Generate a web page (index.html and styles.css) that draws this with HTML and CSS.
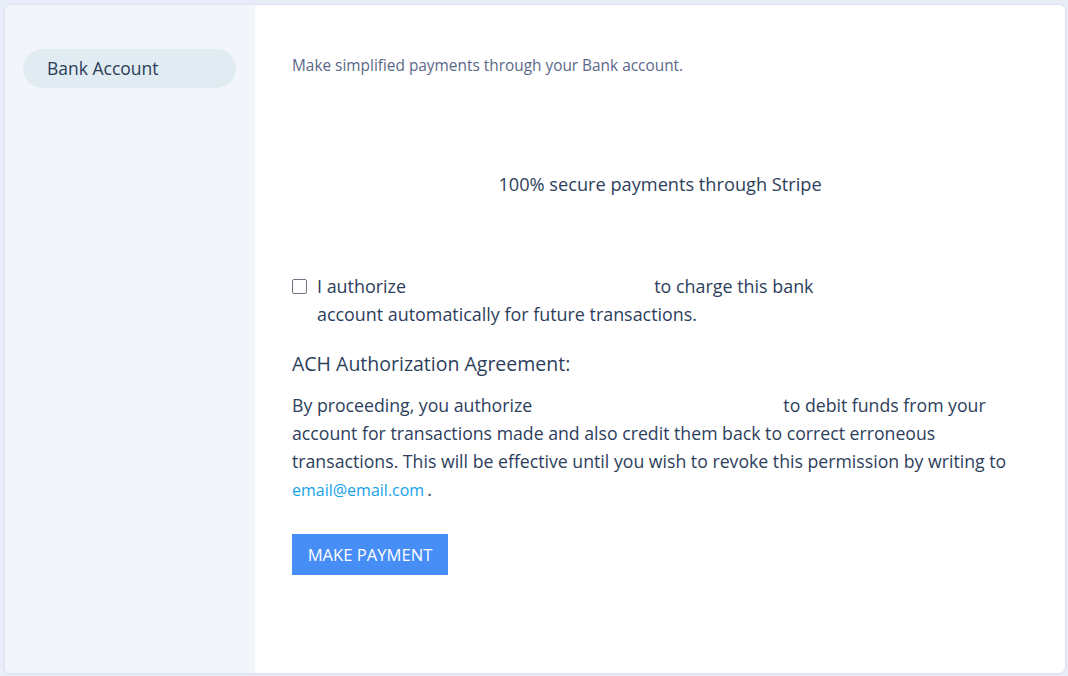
FILE: index.html
```html
<!DOCTYPE html>
<html>
<head>
<meta charset="utf-8">
<link rel="stylesheet" href="styles.css">
</head>
<body>
<div class="card">
  <aside class="sidebar">
    <div class="tab">Bank Account</div>
  </aside>
  <main class="content">
    <p class="subtitle">Make simplified payments through your Bank account.</p>
    <p class="secure">100% secure payments through Stripe</p>
    <label class="consent">
      <span class="box"></span>
      <span class="consent-text">I authorize <span class="redact r1"></span> to charge this bank account automatically for future transactions.</span>
    </label>
    <h3 class="ach-title">ACH Authorization Agreement:</h3>
    <p class="ach-text">By proceeding, you authorize <span class="redact r2"></span> to debit funds from your account for transactions made and also credit them back to correct erroneous transactions. This will be effective until you wish to revoke this permission by writing to <a class="mail" href="#">email@email.com</a>.</p>
    <button class="pay">MAKE PAYMENT</button>
  </main>
</div>
</body>
</html>
```
FILE: styles.css
```css
html, body {
  margin: 0;
  padding: 0;
}
body {
  background: #e9edf8;
  font-family: "Open Sans", "Lato", sans-serif;
  color: #2d3e5c;
  width: 1068px;
  height: 676px;
  overflow: hidden;
}
.card {
  margin: 5px 3px 3px 5px;
  height: 668px;
  background: #ffffff;
  border-radius: 6px;
  display: flex;
  overflow: hidden;
  box-shadow: 0 0 3px rgba(140, 155, 210, 0.35);
}
.sidebar {
  width: 250px;
  flex: none;
  background: #f2f6fa;
  padding: 44px 19px 0 18px;
  box-sizing: border-box;
}
.tab {
  height: 39px;
  border-radius: 20px;
  background: #e1ebf2;
  color: #2c3e5a;
  font-size: 17.5px;
  line-height: 39px;
  padding-left: 24px;
}
.content {
  flex: 1;
  padding: 0 37px;
}
.subtitle {
  margin: 51px 0 0;
  font-size: 15.4px;
  line-height: 20px;
  color: #5b6888;
}
.secure {
  margin: 96px 0 0;
  text-align: center;
  font-size: 18.2px;
  line-height: 24px;
}
.consent {
  margin-top: 76px;
  display: flex;
  align-items: flex-start;
  width: 540px;
  font-size: 17.9px;
  line-height: 28px;
}
.box {
  flex: none;
  box-sizing: border-box;
  width: 15px;
  height: 15px;
  border: 1.5px solid #6f7582;
  border-radius: 2px;
  margin: 7px 10px 0 0;
}
.redact {
  display: inline-block;
  height: 1px;
  vertical-align: baseline;
}
.r1 { width: 239px; }
.r2 { width: 242px; }
.ach-title {
  margin: 22px 0 0;
  font-weight: normal;
  font-size: 19.5px;
  line-height: 28px;
}
.ach-text {
  margin: 13px 0 0;
  font-size: 17.7px;
  line-height: 28px;
}
.mail {
  color: #16a2e8;
  font-size: 16px;
  text-decoration: none;
  margin-right: 3px;
}
.pay {
  display: block;
  margin-top: 30px;
  width: 156px;
  height: 41px;
  border: none;
  background: #468ef5;
  color: #ffffff;
  font-family: inherit;
  font-size: 16.6px;
  padding: 0;
}
```
